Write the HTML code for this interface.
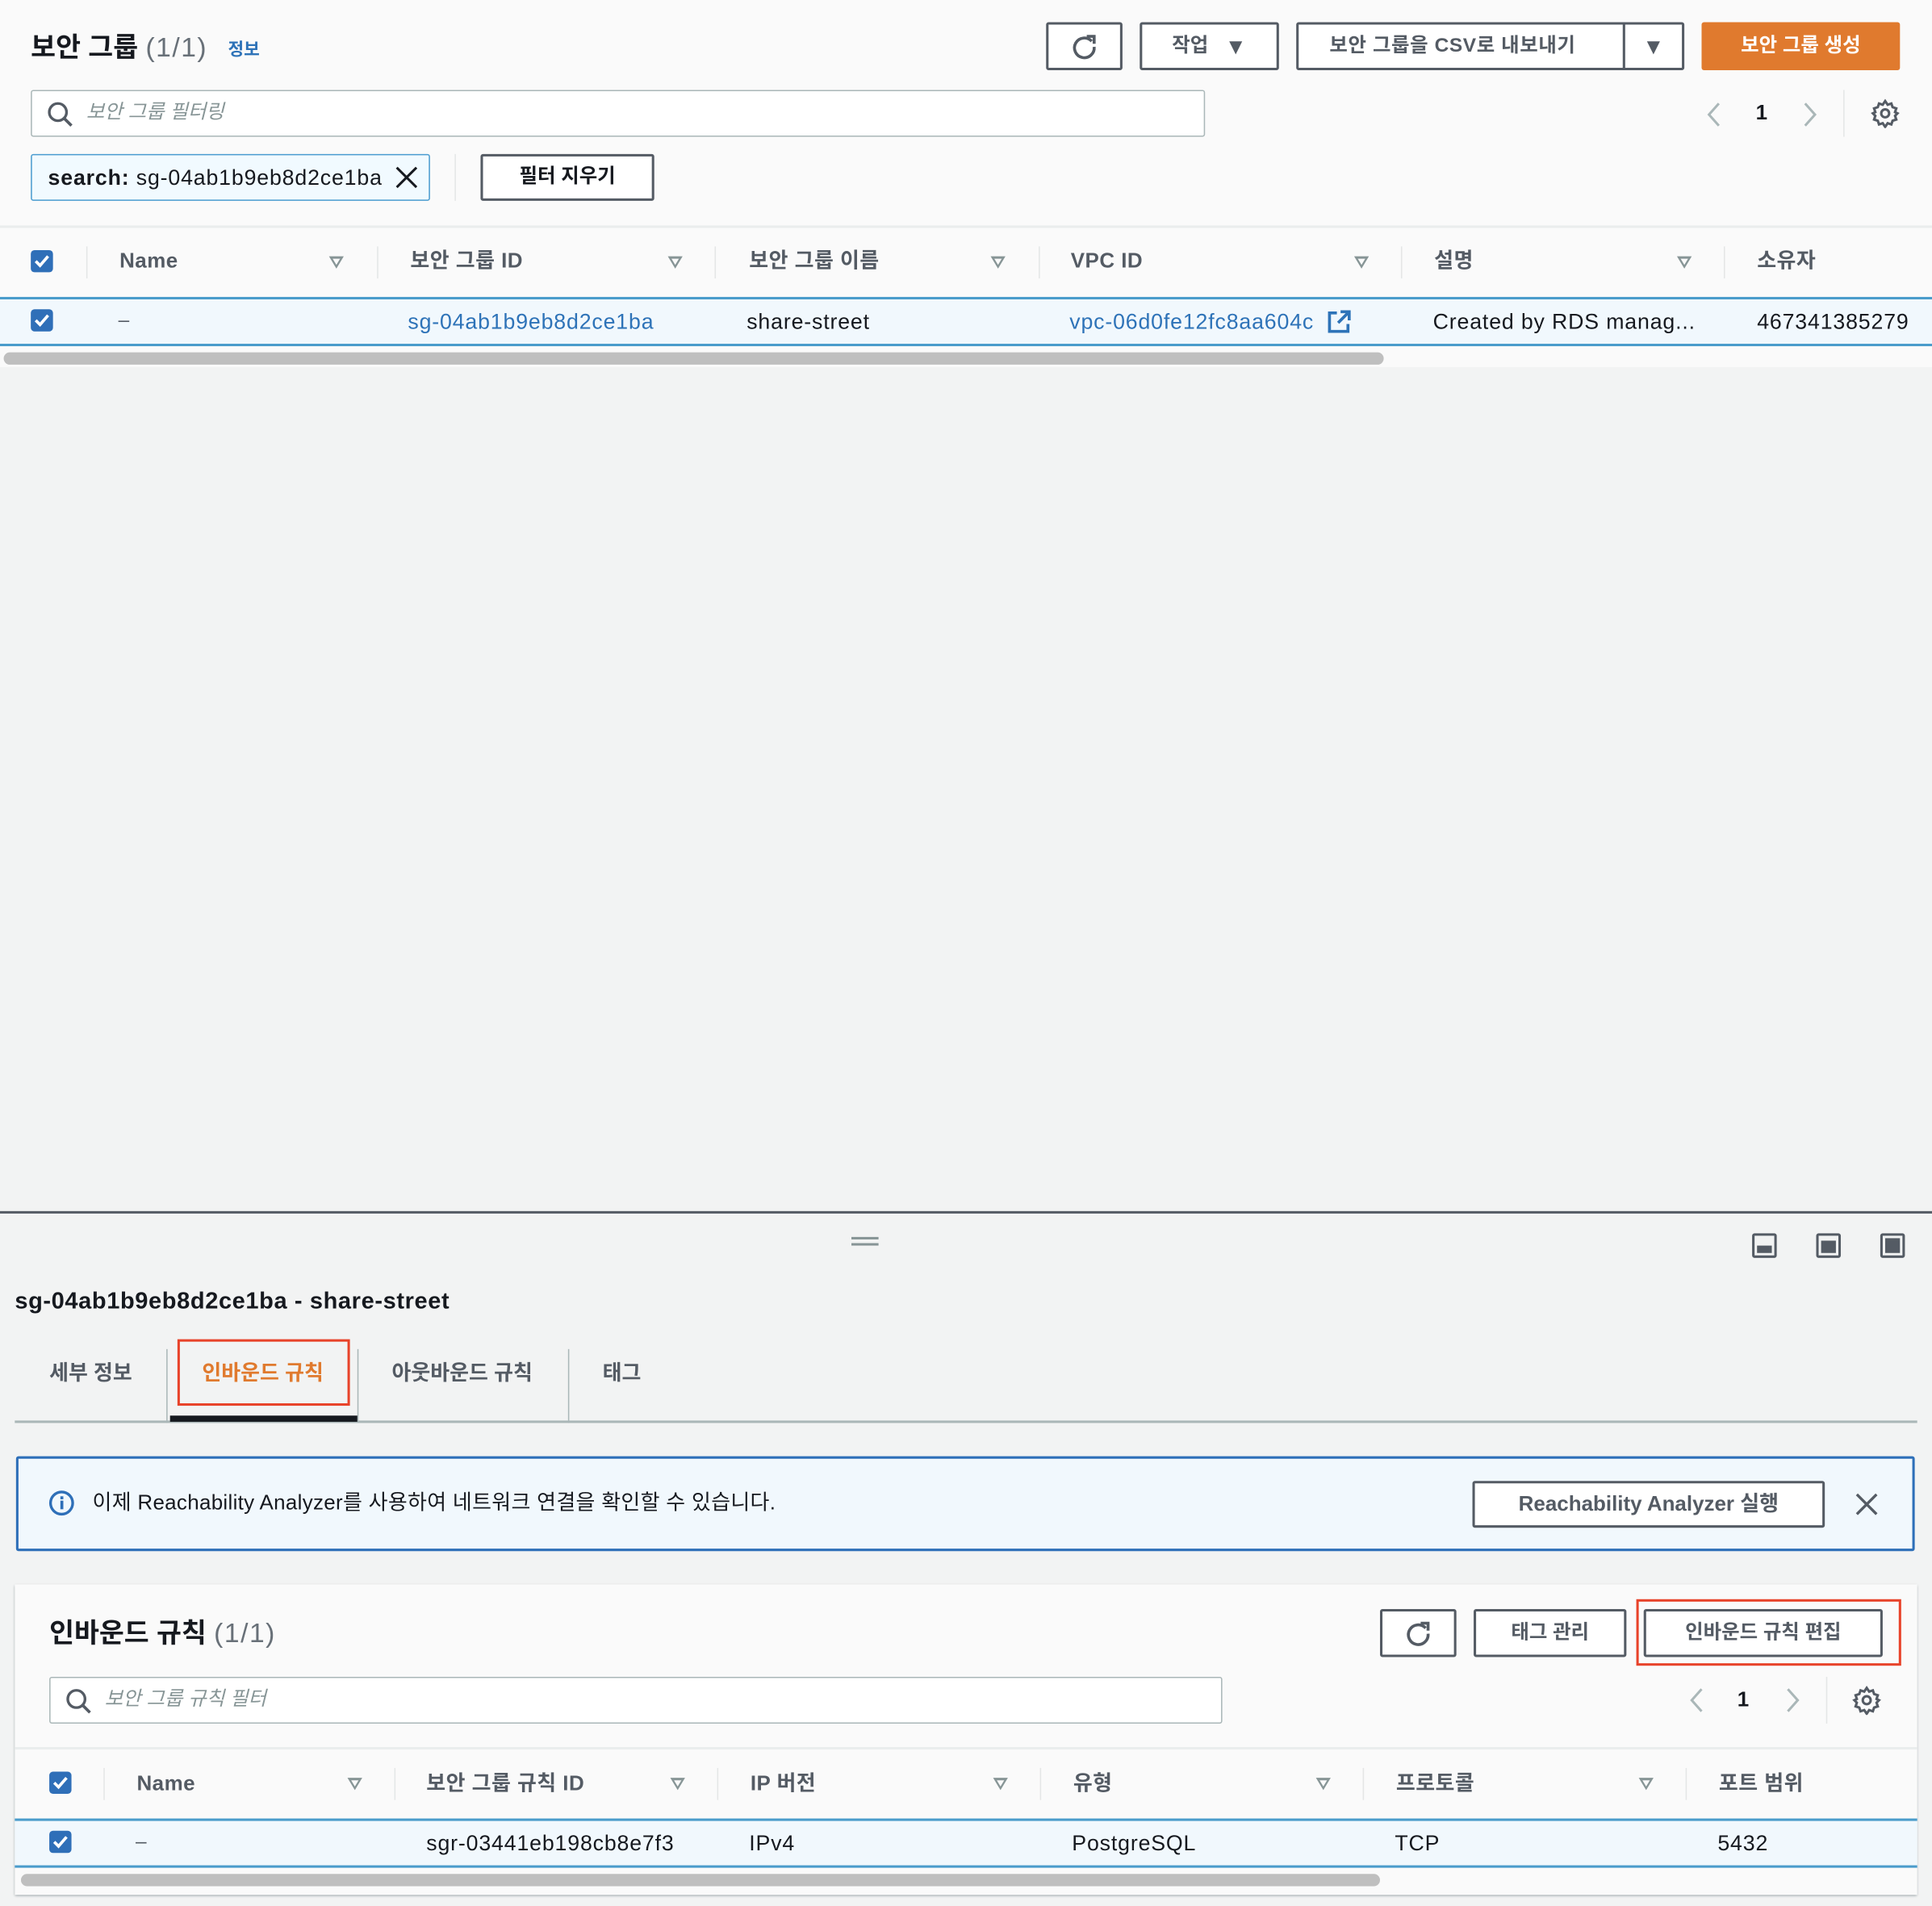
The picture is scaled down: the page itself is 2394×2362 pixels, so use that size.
<!DOCTYPE html>
<html><head><meta charset="utf-8">
<style>
*{box-sizing:border-box;margin:0;padding:0}
html,body{width:2394px;height:2362px;overflow:hidden;background:#f2f3f3}
#w{position:absolute;left:0;top:0;width:1568px;height:1547px;transform:scale(1.52679);transform-origin:0 0;font-family:"Liberation Sans","Noto Sans CJK KR",sans-serif;color:#16191f;font-size:16px;line-height:20px}
.a{position:absolute;white-space:nowrap;line-height:20px}
.t{font-size:17.5px;letter-spacing:0.55px}
.btn{position:absolute;border:2px solid #545b64;border-radius:2px;background:#fff;color:#545b64;font-weight:bold;font-size:16px;display:flex;align-items:center;justify-content:center;line-height:20px}
.inp{position:absolute;border:1px solid #aab7b8;border-radius:2px;background:#fff}
.ph{position:absolute;font-style:italic;color:#879596;font-size:16px;line-height:20px;white-space:nowrap}
.cb{position:absolute;width:18px;height:18px;background:#2f6fb8;border-radius:3px}
.th{position:absolute;font-weight:bold;color:#545b64;font-size:17px;line-height:20px;white-space:nowrap;letter-spacing:0.3px}
.sep{position:absolute;width:1px;background:#e4e6e6}
.tri{position:absolute;width:0;height:0;border-left:6px solid transparent;border-right:6px solid transparent;border-top:10px solid #879596}
.tri:after{content:"";position:absolute;left:-3px;top:-8px;border-left:3px solid transparent;border-right:3px solid transparent;border-top:5px solid #fafafa}
.link{color:#2e73b8}
</style></head><body><div id="w">
<div class="a" style="left:0;top:0;width:1568px;height:298px;background:#fafafa"></div>
<div class="a" style="left:25px;top:27px;font-size:22px;line-height:24px;font-weight:bold">보안 그룹 <span style="font-weight:normal;color:#687078;letter-spacing:1px">(1/1)</span></div>
<div class="a link" style="left:185px;top:30px;font-size:14px;font-weight:bold;color:#2e73b8">정보</div>

<div class="btn" style="left:849px;top:18px;width:62px;height:39px"><svg width="22" height="22" viewBox="0 0 22 22"><path d="M17 6.5A8 8 0 1 0 19 11" fill="none" stroke="#545b64" stroke-width="2.4"/><path d="M13 2.5h6v6" fill="none" stroke="#545b64" stroke-width="2.4"/></svg></div>
<div class="btn" style="left:925px;top:18px;width:113px;height:39px">작업&nbsp;&nbsp;&nbsp;<span style="font-size:18px">▼</span></div>
<div class="btn" style="left:1052px;top:18px;width:315px;height:39px;justify-content:flex-start;padding-left:25px;letter-spacing:0.4px">보안 그룹을 CSV로 내보내기</div>
<div class="a" style="left:1317px;top:19px;width:2px;height:37px;background:#545b64"></div>
<div class="a" style="left:1333px;top:28px;font-size:18px;color:#545b64">▼</div>
<div class="a" style="left:1381px;top:18px;width:161px;height:39px;background:#e07a2e;border-radius:2px;color:#fff;font-weight:bold;display:flex;align-items:center;justify-content:center">보안 그룹 생성</div>

<div class="inp" style="left:25px;top:73px;width:953px;height:38px"></div>
<svg class="a" style="left:37px;top:81px" width="24" height="24" viewBox="0 0 24 24"><circle cx="10" cy="10" r="7" fill="none" stroke="#545b64" stroke-width="2.2"/><path d="M15 15l6 6" stroke="#545b64" stroke-width="2.4"/></svg>
<div class="ph" style="left:70px;top:82px">보안 그룹 필터링</div>

<svg class="a" style="left:1384px;top:82px" width="14" height="22"><path d="M11 2L3 11l8 9" fill="none" stroke="#aab7b8" stroke-width="2"/></svg>
<div class="a" style="left:1425px;top:82px;font-weight:bold;font-size:17px">1</div>
<svg class="a" style="left:1462px;top:82px" width="14" height="22"><path d="M3 2l8 9-8 9" fill="none" stroke="#aab7b8" stroke-width="2"/></svg>
<div class="sep" style="left:1496px;top:73px;height:38px"></div>
<svg class="a" style="left:1518px;top:80px" width="24" height="24" viewBox="0 0 24 24"><path d="M12 2l2 3 3-1 1 3 3 1-1 3 2 1-2 2 1 3-3 1-1 3-3-1-2 3-2-3-3 1-1-3-3-1 1-3-2-2 2-1-1-3 3-1 1-3 3 1z" fill="none" stroke="#545b64" stroke-width="2"/><circle cx="12" cy="12" r="3.2" fill="none" stroke="#545b64" stroke-width="2"/></svg>

<div class="a" style="left:25px;top:125px;width:324px;height:38px;background:#f1faff;border:1px solid #4a9cd0;border-radius:2px"></div>
<div class="a t" style="left:39px;top:134px"><b>search:</b> sg-04ab1b9eb8d2ce1ba</div>
<svg class="a" style="left:320px;top:134px" width="20" height="20"><path d="M2 2l16 16M18 2L2 18" stroke="#16191f" stroke-width="2"/></svg>
<div class="sep" style="left:369px;top:125px;height:38px"></div>
<div class="btn" style="left:390px;top:125px;width:141px;height:38px;color:#16191f">필터 지우기</div>

<div class="a" style="left:0;top:183px;width:1568px;height:2px;background:#eaeded"></div>
<div class="cb" style="left:25px;top:203px"><svg width="18" height="18"><path d="M4 9l3.5 3.5L14 5" fill="none" stroke="#fff" stroke-width="2.4"/></svg></div>
<div class="sep" style="left:70px;top:200px;height:26px"></div>
<div class="th" style="left:97px;top:202px">Name</div><div class="tri" style="left:267px;top:208px"></div>
<div class="sep" style="left:306px;top:200px;height:26px"></div>
<div class="th" style="left:333px;top:202px">보안 그룹 ID</div><div class="tri" style="left:542px;top:208px"></div>
<div class="sep" style="left:580px;top:200px;height:26px"></div>
<div class="th" style="left:608px;top:202px">보안 그룹 이름</div><div class="tri" style="left:804px;top:208px"></div>
<div class="sep" style="left:843px;top:200px;height:26px"></div>
<div class="th" style="left:869px;top:202px">VPC ID</div><div class="tri" style="left:1099px;top:208px"></div>
<div class="sep" style="left:1137px;top:200px;height:26px"></div>
<div class="th" style="left:1164px;top:202px">설명</div><div class="tri" style="left:1361px;top:208px"></div>
<div class="sep" style="left:1399px;top:200px;height:26px"></div>
<div class="th" style="left:1426px;top:202px">소유자</div>

<div class="a" style="left:0;top:241px;width:1568px;height:40px;background:#f1f8fd;border-top:2px solid #4a9ccb;border-bottom:2px solid #4a9ccb"></div>
<div class="cb" style="left:25px;top:251px"><svg width="18" height="18"><path d="M4 9l3.5 3.5L14 5" fill="none" stroke="#fff" stroke-width="2.4"/></svg></div>
<div class="a" style="left:96px;top:251px;color:#545b64">–</div>
<div class="a link t" style="left:331px;top:251px">sg-04ab1b9eb8d2ce1ba</div>
<div class="a t" style="left:606px;top:251px">share-street</div>
<div class="a link t" style="left:868px;top:251px">vpc-06d0fe12fc8aa604c</div>
<svg class="a" style="left:1077px;top:251px" width="20" height="20"><path d="M8 3H2v15h15v-6" fill="none" stroke="#2e73b8" stroke-width="2.4"/><path d="M11 2h7v7M18 2l-9 9" fill="none" stroke="#2e73b8" stroke-width="2.4"/></svg>
<div class="a t" style="left:1163px;top:251px">Created by RDS manag...</div>
<div class="a t" style="left:1426px;top:251px">467341385279</div>
<div class="a" style="left:3px;top:286px;width:1120px;height:10px;background:#bfbfbf;border-radius:5px"></div>

<div class="a" style="left:0;top:983px;width:1568px;height:2px;background:#545b64"></div>
<div class="a" style="left:691px;top:1004px;width:22px;height:2px;background:#879596"></div>
<div class="a" style="left:691px;top:1009px;width:22px;height:2px;background:#879596"></div>
<div class="a" style="left:1422px;top:1001px;width:20px;height:20px;border:2px solid #545b64;border-radius:2px"><div style="position:absolute;left:2px;right:2px;bottom:2px;height:6px;background:#545b64"></div></div>
<div class="a" style="left:1474px;top:1001px;width:20px;height:20px;border:2px solid #545b64;border-radius:2px"><div style="position:absolute;left:2px;right:2px;bottom:2px;height:10px;background:#545b64"></div></div>
<div class="a" style="left:1526px;top:1001px;width:20px;height:20px;border:2px solid #545b64;border-radius:2px"><div style="position:absolute;left:2px;right:2px;bottom:2px;top:2px;background:#545b64"></div></div>

<div class="a" style="left:12px;top:1047px;font-size:19px;font-weight:bold;letter-spacing:0.4px">sg-04ab1b9eb8d2ce1ba - share-street</div>

<div class="a" style="left:40px;top:1105px;font-weight:bold;color:#545b64;font-size:17px">세부 정보</div>
<div class="sep" style="left:135px;top:1095px;height:60px;background:#aab7b8"></div>
<div class="a" style="left:164px;top:1105px;font-weight:bold;color:#e07a2e;font-size:17px">인바운드 규칙</div>
<div class="a" style="left:144px;top:1087px;width:140px;height:54px;border:2px solid #e8432a"></div>
<div class="sep" style="left:290px;top:1095px;height:60px;background:#aab7b8"></div>
<div class="a" style="left:318px;top:1105px;font-weight:bold;color:#545b64;font-size:17px">아웃바운드 규칙</div>
<div class="sep" style="left:461px;top:1095px;height:60px;background:#aab7b8"></div>
<div class="a" style="left:489px;top:1105px;font-weight:bold;color:#545b64;font-size:17px">태그</div>
<div class="a" style="left:12px;top:1153px;width:1544px;height:2px;background:#aab7b8"></div>
<div class="a" style="left:138px;top:1149px;width:152px;height:5px;background:#16191f"></div>

<div class="a" style="left:13px;top:1182px;width:1541px;height:77px;background:#f1f8fd;border:2px solid #2e6fb8;border-radius:2px"></div>
<svg class="a" style="left:39px;top:1209px" width="22" height="22"><circle cx="11" cy="11" r="9" fill="none" stroke="#2e6fb8" stroke-width="2.2"/><rect x="10" y="9" width="2.4" height="7" fill="#2e6fb8"/><rect x="10" y="5.5" width="2.4" height="2.4" fill="#2e6fb8"/></svg>
<div class="a" style="left:75px;top:1210px;font-size:17px;letter-spacing:0.2px">이제 Reachability Analyzer를 사용하여 네트워크 연결을 확인할 수 있습니다.</div>
<div class="btn" style="left:1195px;top:1202px;width:286px;height:38px;font-size:17px">Reachability Analyzer 실행</div>
<svg class="a" style="left:1505px;top:1211px" width="20" height="20"><path d="M2 2l16 16M18 2L2 18" stroke="#545b64" stroke-width="2.2"/></svg>

<div class="a" style="left:12px;top:1286px;width:1544px;height:252px;background:#fafafa;box-shadow:0 1px 2px rgba(0,28,36,.4)"></div>
<div class="a" style="left:40px;top:1314px;font-size:22px;line-height:24px;font-weight:bold">인바운드 규칙 <span style="font-weight:normal;color:#687078;letter-spacing:1px">(1/1)</span></div>
<div class="btn" style="left:1120px;top:1306px;width:62px;height:39px"><svg width="22" height="22" viewBox="0 0 22 22"><path d="M17 6.5A8 8 0 1 0 19 11" fill="none" stroke="#545b64" stroke-width="2.4"/><path d="M13 2.5h6v6" fill="none" stroke="#545b64" stroke-width="2.4"/></svg></div>
<div class="btn" style="left:1196px;top:1306px;width:124px;height:39px">태그 관리</div>
<div class="btn" style="left:1334px;top:1306px;width:194px;height:39px">인바운드 규칙 편집</div>
<div class="a" style="left:1328px;top:1298px;width:215px;height:54px;border:2px solid #e8432a"></div>

<div class="inp" style="left:40px;top:1361px;width:952px;height:38px"></div>
<svg class="a" style="left:52px;top:1369px" width="24" height="24" viewBox="0 0 24 24"><circle cx="10" cy="10" r="7" fill="none" stroke="#545b64" stroke-width="2.2"/><path d="M15 15l6 6" stroke="#545b64" stroke-width="2.4"/></svg>
<div class="ph" style="left:85px;top:1370px">보안 그룹 규칙 필터</div>
<svg class="a" style="left:1370px;top:1369px" width="14" height="22"><path d="M11 2L3 11l8 9" fill="none" stroke="#aab7b8" stroke-width="2"/></svg>
<div class="a" style="left:1410px;top:1370px;font-weight:bold;font-size:17px">1</div>
<svg class="a" style="left:1448px;top:1369px" width="14" height="22"><path d="M3 2l8 9-8 9" fill="none" stroke="#aab7b8" stroke-width="2"/></svg>
<div class="sep" style="left:1482px;top:1361px;height:38px"></div>
<svg class="a" style="left:1503px;top:1368px" width="24" height="24" viewBox="0 0 24 24"><path d="M12 2l2 3 3-1 1 3 3 1-1 3 2 1-2 2 1 3-3 1-1 3-3-1-2 3-2-3-3 1-1-3-3-1 1-3-2-2 2-1-1-3 3-1 1-3 3 1z" fill="none" stroke="#545b64" stroke-width="2"/><circle cx="12" cy="12" r="3.2" fill="none" stroke="#545b64" stroke-width="2"/></svg>

<div class="a" style="left:12px;top:1418px;width:1544px;height:2px;background:#eaeded"></div>
<div class="cb" style="left:40px;top:1438px"><svg width="18" height="18"><path d="M4 9l3.5 3.5L14 5" fill="none" stroke="#fff" stroke-width="2.4"/></svg></div>
<div class="sep" style="left:84px;top:1435px;height:26px"></div>
<div class="th" style="left:111px;top:1438px">Name</div><div class="tri" style="left:282px;top:1443px"></div>
<div class="sep" style="left:320px;top:1435px;height:26px"></div>
<div class="th" style="left:346px;top:1438px">보안 그룹 규칙 ID</div><div class="tri" style="left:544px;top:1443px"></div>
<div class="sep" style="left:582px;top:1435px;height:26px"></div>
<div class="th" style="left:609px;top:1438px">IP 버전</div><div class="tri" style="left:806px;top:1443px"></div>
<div class="sep" style="left:844px;top:1435px;height:26px"></div>
<div class="th" style="left:871px;top:1438px">유형</div><div class="tri" style="left:1068px;top:1443px"></div>
<div class="sep" style="left:1106px;top:1435px;height:26px"></div>
<div class="th" style="left:1133px;top:1438px">프로토콜</div><div class="tri" style="left:1330px;top:1443px"></div>
<div class="sep" style="left:1368px;top:1435px;height:26px"></div>
<div class="th" style="left:1395px;top:1438px">포트 범위</div>

<div class="a" style="left:12px;top:1476px;width:1544px;height:40px;background:#f1f8fd;border-top:2px solid #4a9ccb;border-bottom:2px solid #4a9ccb"></div>
<div class="cb" style="left:40px;top:1486px"><svg width="18" height="18"><path d="M4 9l3.5 3.5L14 5" fill="none" stroke="#fff" stroke-width="2.4"/></svg></div>
<div class="a" style="left:110px;top:1486px;color:#545b64">–</div>
<div class="a t" style="left:346px;top:1486px">sgr-03441eb198cb8e7f3</div>
<div class="a t" style="left:608px;top:1486px">IPv4</div>
<div class="a t" style="left:870px;top:1486px">PostgreSQL</div>
<div class="a t" style="left:1132px;top:1486px">TCP</div>
<div class="a t" style="left:1394px;top:1486px">5432</div>
<div class="a" style="left:17px;top:1521px;width:1103px;height:10px;background:#bfbfbf;border-radius:5px"></div>
</div></body></html>
